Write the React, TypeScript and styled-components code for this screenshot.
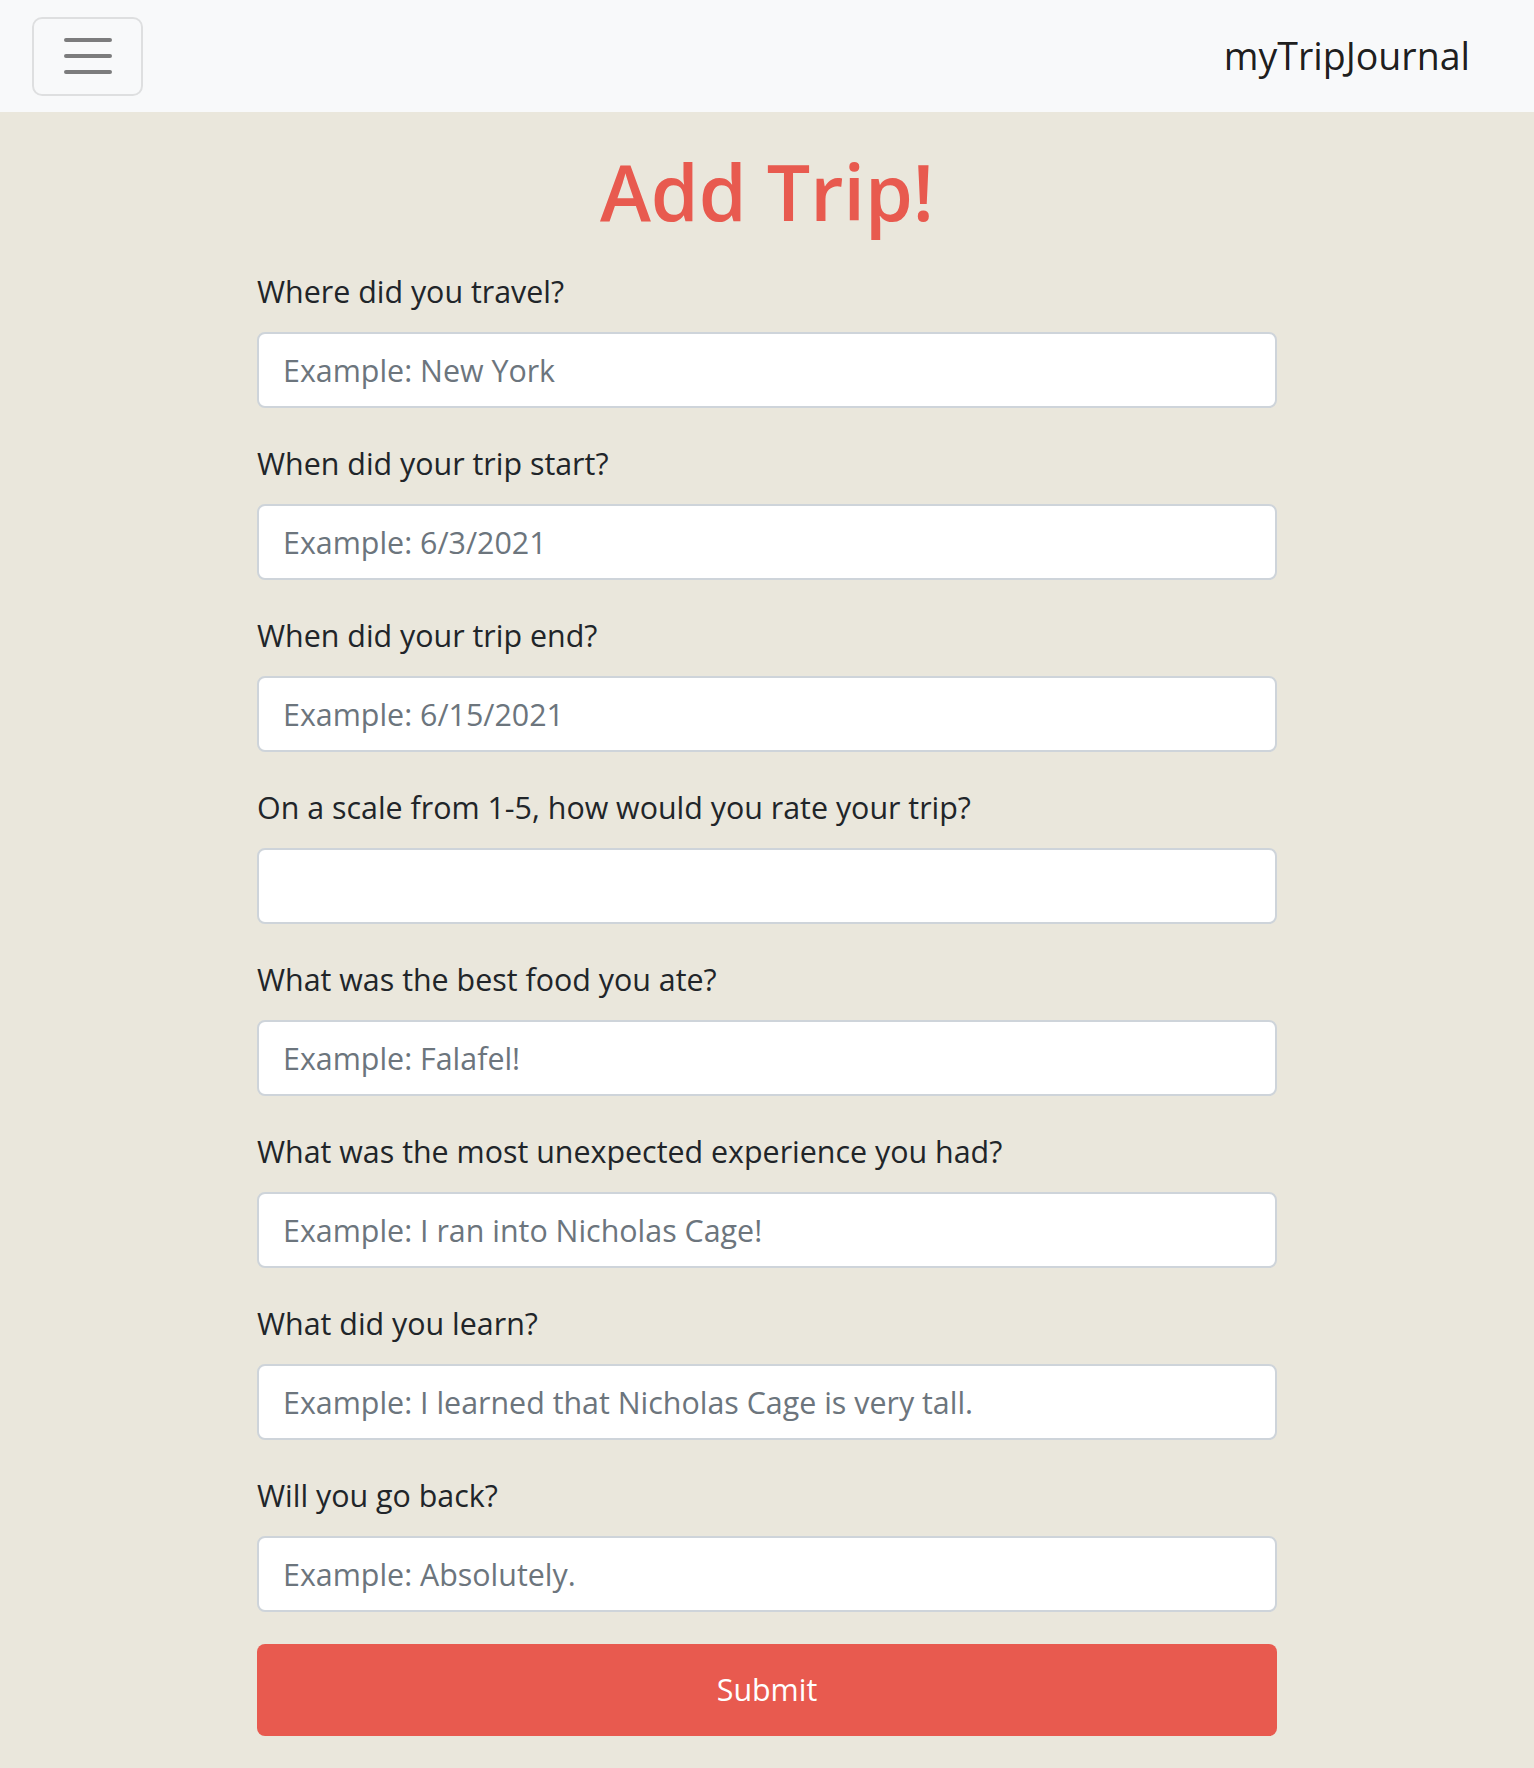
import React from "react";
import styled, { createGlobalStyle } from "styled-components";

const GlobalStyle = createGlobalStyle`
  html, body {
    margin: 0;
    padding: 0;
    background: #eae7dc;
  }
  body {
    font-family: "Open Sans", "Noto Sans", "Liberation Sans", sans-serif;
    color: #212529;
  }
  * { box-sizing: border-box; }
`;

const Navbar = styled.nav`
  display: flex;
  align-items: center;
  justify-content: space-between;
  height: 112px;
  padding: 0 32px;
  background: #f8f9fa;
`;

const Toggler = styled.button`
  display: flex;
  align-items: center;
  justify-content: center;
  width: 111px;
  height: 79px;
  padding: 0;
  background: transparent;
  border: 2px solid rgba(0, 0, 0, 0.1);
  border-radius: 10px;
  cursor: pointer;
`;

const Brand = styled.a`
  margin-right: 32px;
  font-size: 37.5px;
  line-height: 60px;
  color: rgba(0, 0, 0, 0.9);
  text-decoration: none;
`;

const Main = styled.main`
  width: 1020px;
  margin: 0 auto;
  padding-bottom: 32px;
`;

const Title = styled.h1`
  margin: 32px 0 28px;
  font-size: 77px;
  line-height: 96px;
  font-weight: 600;
  text-align: center;
  color: #e85a4f;
`;

const Form = styled.form`
  display: flex;
  flex-direction: column;
`;

const Group = styled.div`
  display: flex;
  flex-direction: column;
  margin-bottom: 32px;
`;

const Label = styled.label`
  margin-bottom: 16px;
  font-size: 30.4px;
  line-height: 48px;
  color: #212529;
`;

const Input = styled.input`
  width: 100%;
  height: 76px;
  padding: 12px 24px;
  font-family: inherit;
  font-size: 30.4px;
  line-height: 48px;
  color: #495057;
  background: #fff;
  border: 2px solid #ced4da;
  border-radius: 8px;
  outline: none;
  &::placeholder {
    color: #6c757d;
    opacity: 1;
  }
`;

const SubmitButton = styled.button`
  width: 100%;
  height: 92px;
  font-family: inherit;
  font-size: 30.4px;
  line-height: 48px;
  color: #fff;
  background: #e85a4f;
  border: none;
  border-radius: 8px;
  cursor: pointer;
`;

const fields = [
  { id: "place", label: "Where did you travel?", placeholder: "Example: New York" },
  { id: "start", label: "When did your trip start?", placeholder: "Example: 6/3/2021" },
  { id: "end", label: "When did your trip end?", placeholder: "Example: 6/15/2021" },
  { id: "rating", label: "On a scale from 1-5, how would you rate your trip?", placeholder: "" },
  { id: "food", label: "What was the best food you ate?", placeholder: "Example: Falafel!" },
  { id: "unexpected", label: "What was the most unexpected experience you had?", placeholder: "Example: I ran into Nicholas Cage!" },
  { id: "learn", label: "What did you learn?", placeholder: "Example: I learned that Nicholas Cage is very tall." },
  { id: "back", label: "Will you go back?", placeholder: "Example: Absolutely." },
];

export default function App() {
  return (
    <>
      <GlobalStyle />
      <Navbar>
        <Toggler type="button" aria-label="Toggle navigation">
          <svg width="60" height="60" viewBox="0 0 30 30">
            <path
              d="M4 7h22M4 15h22M4 23h22"
              stroke="rgba(0,0,0,0.5)"
              strokeWidth="2"
              strokeLinecap="round"
              strokeMiterlimit="10"
              fill="none"
            />
          </svg>
        </Toggler>
        <Brand href="#">myTripJournal</Brand>
      </Navbar>
      <Main>
        <Title>Add Trip!</Title>
        <Form onSubmit={(e) => e.preventDefault()}>
          {fields.map((f) => (
            <Group key={f.id}>
              <Label htmlFor={f.id}>{f.label}</Label>
              <Input id={f.id} type="text" placeholder={f.placeholder} />
            </Group>
          ))}
          <SubmitButton type="submit">Submit</SubmitButton>
        </Form>
      </Main>
    </>
  );
}
